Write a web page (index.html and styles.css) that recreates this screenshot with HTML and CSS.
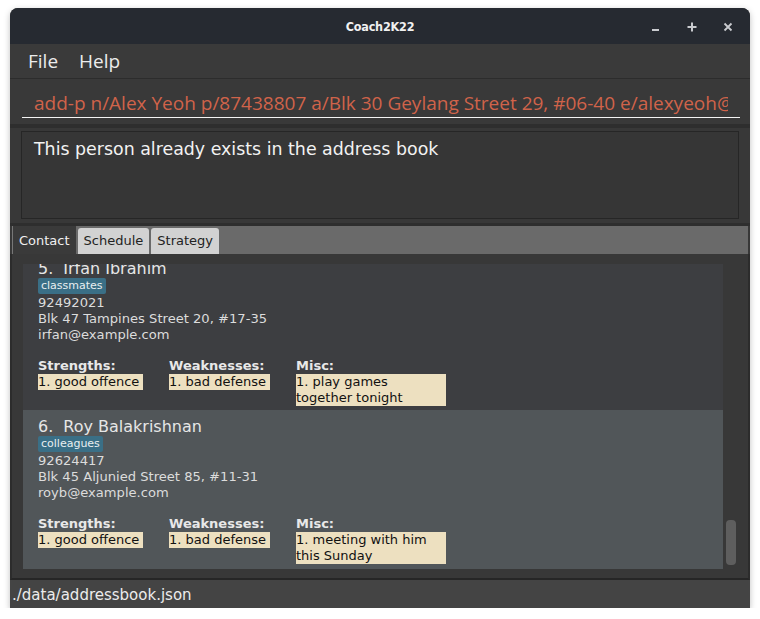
FILE: index.html
```html
<!DOCTYPE html>
<html>
<head>
<meta charset="utf-8">
<link rel="stylesheet" href="styles.css">
</head>
<body>
<div class="window">
  <div class="titlebar">
    <span class="title">Coach2K22</span>
    <div class="controls">
      <svg class="ctl" width="14" height="14" viewBox="0 0 14 14"><rect x="3" y="9" width="7" height="2" fill="#c9cbcf"/></svg>
      <svg class="ctl" width="14" height="14" viewBox="0 0 14 14"><rect x="6" y="2.5" width="2" height="9" fill="#c9cbcf"/><rect x="2.5" y="6" width="9" height="2" fill="#c9cbcf"/></svg>
      <svg class="ctl" width="14" height="14" viewBox="0 0 14 14"><path d="M3.5 3.5 L10.5 10.5 M10.5 3.5 L3.5 10.5" stroke="#c9cbcf" stroke-width="1.8"/></svg>
    </div>
  </div>
  <div class="menubar">
    <span class="menu-item">File</span>
    <span class="menu-item">Help</span>
  </div>
  <div class="command">
    <div class="cmd-field"><div class="cmd-text">add-p n/Alex Yeoh p/87438807 a/Blk 30 Geylang Street 29, #06-40 e/alexyeoh@example.com</div></div>
  </div>
  <div class="result">
    <div class="result-box">This person already exists in the address book</div>
  </div>
  <div class="tabs">
    <div class="tab active">Contact</div>
    <div class="tab">Schedule</div>
    <div class="tab">Strategy</div>
  </div>
  <div class="listpane">
    <div class="viewport">
      <div class="list">
        <div class="card odd">
          <div class="name"><span class="idx">5.</span><span>Irfan Ibrahim</span></div>
          <div class="tags"><span class="tag">classmates</span></div>
          <div class="line">92492021</div>
          <div class="line">Blk 47 Tampines Street 20, #17-35</div>
          <div class="line">irfan@example.com</div>
          <div class="stats">
            <div class="stat s1"><div class="label">Strengths:</div><div class="val">1. good offence</div></div>
            <div class="stat s2"><div class="label">Weaknesses:</div><div class="val">1. bad defense</div></div>
            <div class="stat s3"><div class="label">Misc:</div><div class="val misc">1. play games together tonight</div></div>
          </div>
        </div>
        <div class="card even">
          <div class="name"><span class="idx">6.</span><span>Roy Balakrishnan</span></div>
          <div class="tags"><span class="tag">colleagues</span></div>
          <div class="line">92624417</div>
          <div class="line">Blk 45 Aljunied Street 85, #11-31</div>
          <div class="line">royb@example.com</div>
          <div class="stats">
            <div class="stat s1"><div class="label">Strengths:</div><div class="val">1. good offence</div></div>
            <div class="stat s2"><div class="label">Weaknesses:</div><div class="val">1. bad defense</div></div>
            <div class="stat s3"><div class="label">Misc:</div><div class="val misc">1. meeting with him this Sunday</div></div>
          </div>
        </div>
      </div>
    </div>
    <div class="scrollbar"><div class="thumb"></div></div>
  </div>
  <div class="status">./data/addressbook.json</div>
</div>
</body>
</html>
```
FILE: styles.css
```css
html, body {
  margin: 0;
  padding: 0;
  background: #ffffff;
}
body {
  padding: 8px 10px 0 10px;
  font-family: "DejaVu Sans", sans-serif;
}
.window {
  width: 740px;
  height: 600px;
  border-radius: 8px 8px 0 0;
  overflow: hidden;
  box-shadow: 0 2px 6px rgba(0,0,0,0.25);
  display: flex;
  flex-direction: column;
  background: #383838;
}
.titlebar {
  height: 36px;
  flex: none;
  background: #262a31;
  display: flex;
  align-items: center;
  justify-content: center;
  position: relative;
}
.title {
  color: #f0f0f0;
  font-family: "DejaVu Sans Condensed", "DejaVu Sans", sans-serif;
  font-weight: bold;
  font-size: 12.5px;
  letter-spacing: -0.2px;
}
.controls {
  position: absolute;
  right: 15px;
  top: 12px;
  display: flex;
  gap: 22px;
}
.ctl { display: block; }
.menubar {
  height: 34px;
  flex: none;
  background: #3a3a3a;
  border-bottom: 1px solid #2c2c2c;
  display: flex;
  align-items: center;
  padding-left: 18px;
  gap: 21px;
}
.menu-item {
  color: #ececec;
  font-family: "Open Sans", sans-serif;
  font-size: 19px;
  padding-bottom: 1px;
}
.command {
  flex: none;
  background: #393939;
  padding: 0 10px 0 12px;
  border-bottom: 4px solid #2e2e2e;
  box-sizing: border-box;
  height: 49px;
}
.cmd-field {
  height: 39px;
  border-bottom: 1px solid #f4f4f4;
  box-sizing: border-box;
  padding: 0 12px;
}
.cmd-text {
  color: #d0634a;
  font-family: "Open Sans", sans-serif;
  font-size: 19px;
  line-height: 48px;
  white-space: nowrap;
  overflow: hidden;
  height: 38px;
}
.result {
  flex: none;
  height: 98px;
  box-sizing: border-box;
  padding: 3px 11px 0 11px;
  background: #383838;
  border-bottom: 3px solid #2e2e2e;
}
.result-box {
  height: 88px;
  box-sizing: border-box;
  border: 1px solid #262626;
  background: #363636;
  color: #f2f2f2;
  font-size: 17.4px;
  padding: 7px 0 0 12px;
}
.tabs {
  flex: none;
  height: 28px;
  background: #6a6a6a;
  margin: 0 2px;
  display: flex;
  align-items: flex-end;
  gap: 2px;
  padding-left: 0;
}
.tab {
  height: 26px;
  line-height: 26px;
  padding: 0 6px;
  background: #d2d2d2;
  color: #222;
  font-size: 13px;
  border-radius: 3px 3px 0 0;
}
.tab.active {
  background: #3a3a3a;
  color: #f0f0f0;
  height: 28px;
  line-height: 29px;
  border-radius: 0;
  border-left: 1px solid #777;
}
.listpane {
  flex: none;
  height: 326px;
  box-sizing: border-box;
  background: #383838;
  border-left: 2px solid #2c2c2c;
  border-right: 2px solid #2c2c2c;
  border-bottom: 2px solid #262626;
  padding: 10px 0 9px 11px;
  display: flex;
}
.viewport {
  width: 700px;
  height: 305px;
  overflow: hidden;
}
.list {
  margin-top: -12px;
}
.card {
  padding: 7px 15px 6px 15px;
  color: #dcdcdc;
}
.card.odd { background: #3d3e41; padding-bottom: 4px; }
.card.even { background: #515659; }
.name {
  font-size: 16px;
  line-height: 19px;
  color: #e6e6e6;
  display: flex;
}
.idx { margin-right: 10px; }
.tags {
  height: 17px;
  display: flex;
  align-items: flex-start;
}
.tag {
  background: #3a6f86;
  color: #e8eef0;
  font-size: 11px;
  line-height: 16px;
  height: 16px;
  padding: 0 3px;
  border-radius: 2px;
}
.line {
  font-size: 13.1px;
  line-height: 16px;
}
.stats {
  margin-top: 15px;
  display: grid;
  grid-template-columns: 131px 127px 150px;
}
.label {
  font-weight: bold;
  font-size: 13px;
  line-height: 16px;
  color: #e8e8e8;
}
.val {
  display: inline-block;
  background: #ede0c0;
  color: #111;
  font-size: 13px;
  line-height: 16px;
  padding-right: 4px;
  vertical-align: top;
}
.val.misc {
  width: 150px;
  box-sizing: border-box;
  display: block;
}
.scrollbar {
  width: 25px;
  position: relative;
}
.thumb {
  position: absolute;
  left: 3px;
  top: 256px;
  width: 10px;
  height: 45px;
  background: #5e5e5e;
  border-radius: 4px;
}
.status {
  flex: 1;
  background: #444444;
  color: #ececec;
  font-size: 15px;
  line-height: 31px;
  padding-left: 2px;
}
```
